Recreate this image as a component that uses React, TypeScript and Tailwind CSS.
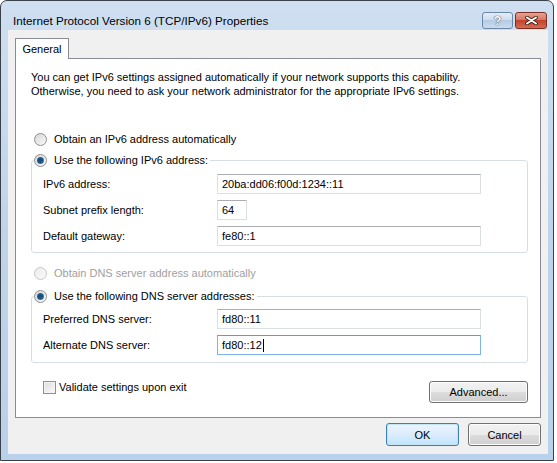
import React from "react";

function Radio({ checked, disabled }: { checked?: boolean; disabled?: boolean }) {
  return (
    <span
      className={`flex h-[13px] w-[13px] shrink-0 items-center justify-center rounded-full border ${
        disabled
          ? "border-[#c8c8c8] bg-gradient-to-br from-[#ececec] to-[#fafafa]"
          : "border-[#8e8f8f] bg-gradient-to-br from-[#d6d6d6] to-[#fbfbfb]"
      }`}
    >
      {checked && (
        <span className="h-[7px] w-[7px] rounded-full bg-[radial-gradient(circle_at_45%_45%,#1a4a78_0%,#1c5585_45%,#6fb6e4_100%)]" />
      )}
    </span>
  );
}

function Field({ value, w = "w-[264px]", focused }: { value: string; w?: string; focused?: boolean }) {
  return (
    <div
      className={`flex h-[20px] items-center border bg-white pl-[4px] text-[11px] text-black ${w} ${
        focused ? "border-[#7eb4ea] border-t-[#569de5]" : "border-[#dbdfe6] border-t-[#abadb3]"
      }`}
    >
      <span>{value}</span>
      {focused && <span className="ml-[1px] h-[13px] w-px bg-black" />}
    </div>
  );
}

function Row({ label, children }: { label: string; children: React.ReactNode }) {
  return (
    <div className="flex h-[20px] items-center">
      <span className="w-[174px] shrink-0">{label}</span>
      {children}
    </div>
  );
}

function Button({ label, w, primary }: { label: string; w: string; primary?: boolean }) {
  return (
    <div
      className={`flex items-center justify-center rounded-[3px] border text-[11px] text-black ${w} ${
        primary
          ? "border-[#3c7fb1] bg-gradient-to-b from-[#eaf6fd] via-[#dcecfc] to-[#bee6fd] shadow-[inset_0_0_0_1px_#c4e5f6]"
          : "border-[#707070] bg-[linear-gradient(#f2f2f2_0%,#ebebeb_50%,#dddddd_50%,#cfcfcf_100%)] shadow-[inset_0_0_0_1px_#fcfcfc]"
      }`}
    >
      {label}
    </div>
  );
}

export default function App() {
  return (
    <div className="h-[463px] w-[557px] bg-white font-['Liberation_Sans',Arial,sans-serif] text-[11px] leading-[14px] text-black">
      <div className="flex h-[461px] w-[554px] flex-col rounded-t-[7px] border border-[#3a4148] bg-gradient-to-b from-[#cfdff1] via-[#bfd4eb] to-[#b9d1ea]">
        {/* title bar */}
        <div className="flex h-[29px] shrink-0 items-start pl-[12px] pr-[6px] pt-[11px]">
          <div className="flex h-[17px] flex-1 items-center text-[11.7px]">
            Internet Protocol Version 6 (TCP/IPv6) Properties
          </div>
          <div className="flex gap-[2px]">
            <div className="flex h-[17px] w-[31px] items-center justify-center rounded-[3px] border border-[#6a87a8] bg-[linear-gradient(#e4edf7_0%,#cbdbec_50%,#b5cbe3_50%,#c9dcef_100%)] text-[13px] font-bold leading-none text-white [text-shadow:0_0_1px_#2c3e55,0_0_1px_#2c3e55]">
              ?
            </div>
            <div className="flex h-[17px] w-[32px] items-center justify-center rounded-[3px] border border-[#7b3026] bg-[linear-gradient(#e8a293_0%,#d4735f_50%,#c2432d_50%,#d66a4f_100%)]">
              <svg width="13" height="9" viewBox="0 0 13 9">
                <path d="M2 1.5 L11 7.5 M11 1.5 L2 7.5" stroke="#3a1a14" strokeWidth="3.6" strokeLinecap="round" />
                <path d="M2 1.5 L11 7.5 M11 1.5 L2 7.5" stroke="#ffffff" strokeWidth="2" strokeLinecap="round" />
              </svg>
            </div>
          </div>
        </div>

        {/* client area */}
        <div className="ml-[7px] mr-[5px] flex h-[424px] shrink-0 flex-col bg-[#f0f0f0] px-[7px] pt-[8px]">
          <div className="flex">
            <div className="relative z-10 -mb-px flex h-[21px] w-[54px] items-start justify-center border border-b-0 border-[#898c95] bg-white pt-[3px]">
              General
            </div>
          </div>
          <div className="flex h-[360px] flex-col border border-[#898c95] bg-white pl-[15px] pr-[12px] pt-[11px]">
            <p>
              You can get IPv6 settings assigned automatically if your network supports this capability.
              <br />
              Otherwise, you need to ask your network administrator for the appropriate IPv6 settings.
            </p>

            <div className="mt-[33px] flex h-[16px] items-center gap-[7px] pl-[3px]">
              <Radio />
              <span>Obtain an IPv6 address automatically</span>
            </div>

            <fieldset className="mt-[5px] rounded-[3px] border border-[#d5dfe5] pb-[6px]">
              <legend className="ml-[2px] flex h-[16px] items-center gap-[7px] pr-[2px]">
                <Radio checked />
                <span>Use the following IPv6 address:</span>
              </legend>
              <div className="flex flex-col gap-[6px] pl-[11px] pt-[6px]">
                <Row label="IPv6 address:">
                  <Field value="20ba:dd06:f00d:1234::11" />
                </Row>
                <Row label="Subnet prefix length:">
                  <Field value="64" w="w-[30px]" />
                </Row>
                <Row label="Default gateway:">
                  <Field value="fe80::1" />
                </Row>
              </div>
            </fieldset>

            <div className="mt-[12px] flex h-[16px] items-center gap-[7px] pl-[3px] text-[#a0a0a0]">
              <Radio disabled />
              <span>Obtain DNS server address automatically</span>
            </div>

            <fieldset className="mt-[7px] rounded-[3px] border border-[#d5dfe5] pb-[7px]">
              <legend className="ml-[2px] flex h-[16px] items-center gap-[7px] pr-[2px]">
                <Radio checked />
                <span>Use the following DNS server addresses:</span>
              </legend>
              <div className="flex flex-col gap-[6px] pl-[11px] pt-[5px]">
                <Row label="Preferred DNS server:">
                  <Field value="fd80::11" />
                </Row>
                <Row label="Alternate DNS server:">
                  <Field value="fd80::12" focused />
                </Row>
              </div>
            </fieldset>

            <div className="mt-[17px] flex items-start justify-between">
              <div className="flex items-center gap-[3px] pl-[12px]">
                <span className="h-[13px] w-[13px] border border-[#8e8f8f] bg-gradient-to-br from-[#dcdcdc] to-[#fbfbfb] shadow-[inset_0_0_0_1px_#f4f4f4]" />
                <span>Validate settings upon exit</span>
              </div>
              <div className="mt-[1px] flex h-[22px]">
                <Button label="Advanced..." w="w-[99px]" />
              </div>
            </div>
          </div>

          <div className="mt-[5px] flex h-[23px] justify-end gap-[9px]">
            <Button label="OK" w="w-[73px]" primary />
            <Button label="Cancel" w="w-[73px]" />
          </div>
        </div>
      </div>
    </div>
  );
}
